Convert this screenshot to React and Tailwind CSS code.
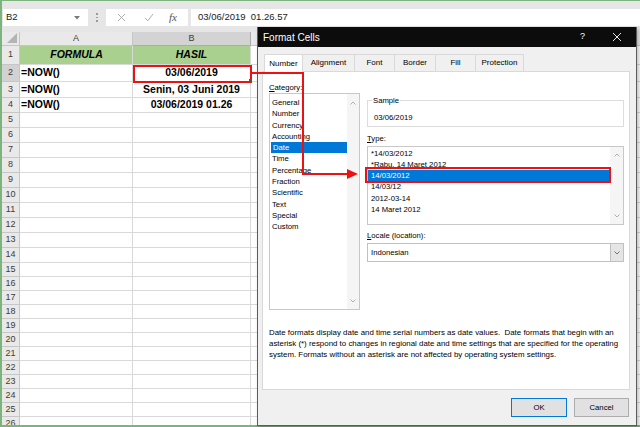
import React from "react";

const catItems = [
  "General",
  "Number",
  "Currency",
  "Accounting",
  "Date",
  "Time",
  "Percentage",
  "Fraction",
  "Scientific",
  "Text",
  "Special",
  "Custom",
];

const typeItems = [
  "*14/03/2012",
  "*Rabu, 14 Maret 2012",
  "14/03/2012",
  "14/03/12",
  "2012-03-14",
  "14 Maret 2012",
];

const tabs = [
  ["Number", "w-[39px]"],
  ["Alignment", "w-[52px]"],
  ["Font", "w-[40px]"],
  ["Border", "w-[41px]"],
  ["Fill", "w-[40px]"],
  ["Protection", "w-[48px]"],
];

const lowerRows = [5, 6, 7, 8, 9, 10, 11, 12, 13, 14, 15, 16, 17, 18, 19, 20, 21, 22, 23, 24, 25, 26];

const Up = () => (
  <svg width="6" height="4" viewBox="0 0 6 4">
    <path d="M0.5 3.5 L3 1 L5.5 3.5" fill="none" stroke="#a8a8a8" strokeWidth="0.9" />
  </svg>
);

const Down = ({ c = "#a8a8a8" }) => (
  <svg width="6" height="4" viewBox="0 0 6 4">
    <path d="M0.5 0.5 L3 3 L5.5 0.5" fill="none" stroke={c} strokeWidth="0.9" />
  </svg>
);

function Row({ num, h, a, b, green, sel }) {
  return (
    <div className={`flex shrink-0 ${h}`}>
      <div
        className={`w-[18px] shrink-0 flex items-center justify-center border-r border-b border-[#c6c6c6] text-[9px] text-[#3c3c3c] ${
          sel ? "bg-[#d2d2d2]" : "bg-[#e9e9e9]"
        }`}
      >
        {num}
      </div>
      <div
        className={`w-[113px] shrink-0 flex items-center pl-[1px] border-r border-b border-[#d9d9d9] text-[10.5px] font-bold text-black ${
          green ? "bg-[#a9d08e] justify-center italic" : ""
        }`}
      >
        {a}
      </div>
      <div
        className={`w-[118px] shrink-0 flex items-center justify-center border-r border-b border-[#d9d9d9] text-[10.5px] font-bold text-black ${
          green ? "bg-[#a9d08e] italic" : ""
        }`}
      >
        {b}
      </div>
      <div className="flex-1 flex border-b border-[#d9d9d9]">
        <div className="w-[110px] border-r border-[#d9d9d9]" />
        <div className="w-[110px] border-r border-[#d9d9d9]" />
        <div className="w-[110px] border-r border-[#d9d9d9]" />
      </div>
    </div>
  );
}

export default function App() {
  return (
    <div className="relative w-[640px] h-[427px] overflow-hidden bg-white font-['Liberation_Sans',Arial,sans-serif]">
      {/* spreadsheet */}
      <div className="h-[427px] flex flex-col overflow-hidden border-l-2 border-t border-b-2 border-[#7db37d]">
        {/* formula bar */}
        <div className="h-[31px] shrink-0 bg-[#e6e6e6] flex items-start pt-[8px]">
          <div className="ml-[1px] w-[85px] h-[17px] bg-white flex items-center justify-between px-[3px]">
            <span className="text-[9.5px] text-[#222]">B2</span>
            <svg width="6" height="4" viewBox="0 0 6 4" className="mr-[5px]">
              <path d="M0 0 L6 0 L3 3.5 Z" fill="#7a7a7a" />
            </svg>
          </div>
          <div className="w-[18px] h-[17px] flex flex-col items-center justify-center gap-[2px]">
            <div className="w-[1.5px] h-[1.5px] bg-[#9a9a9a]" />
            <div className="w-[1.5px] h-[1.5px] bg-[#9a9a9a]" />
            <div className="w-[1.5px] h-[1.5px] bg-[#9a9a9a]" />
          </div>
          <div className="w-[82px] h-[17px] bg-white flex items-center">
            <svg width="9" height="9" viewBox="0 0 9 9" className="ml-[11px]">
              <path d="M1 1 L8 8 M8 1 L1 8" stroke="#a5a5a5" strokeWidth="0.9" />
            </svg>
            <svg width="10" height="9" viewBox="0 0 10 9" className="ml-[18px]">
              <path d="M1 5 L3.8 7.8 L9 1" fill="none" stroke="#a5a5a5" strokeWidth="0.9" />
            </svg>
            <span className="ml-[15px] font-['Liberation_Serif',serif] italic text-[11px] text-[#555]">
              fx
            </span>
          </div>
          <div className="ml-[3px] flex-1 h-[17px] bg-white flex items-center pl-[7px]">
            <span className="text-[9.5px] text-[#222] whitespace-pre">03/06/2019  01.26.57</span>
          </div>
        </div>

        {/* column headers */}
        <div className="h-[14px] shrink-0 flex bg-[#e9e9e9] text-[9px] text-[#3c3c3c]">
          <div className="w-[18px] shrink-0 border-r border-b border-[#c6c6c6] flex items-end justify-end p-[2px]">
            <svg width="10" height="10" viewBox="0 0 10 10">
              <path d="M10 0 L10 10 L0 10 Z" fill="#b4b4b4" />
            </svg>
          </div>
          <div className="w-[113px] shrink-0 border-r border-b border-[#c6c6c6] flex items-center justify-center">
            A
          </div>
          <div className="w-[118px] shrink-0 border-r border-b border-[#ababab] bg-[#d3d3d3] flex items-center justify-center">
            B
          </div>
          <div className="flex-1 border-b border-[#c6c6c6]" />
        </div>

        <Row num={1} h="h-[19px]" a="FORMULA" b="HASIL" green />
        <Row num={2} h="h-[17px]" a="=NOW()" b="03/06/2019" sel />
        <Row num={3} h="h-[16px]" a="=NOW()" b="Senin, 03 Juni 2019" />
        <Row num={4} h="h-[15px]" a="=NOW()" b="03/06/2019 01.26" />
        {lowerRows.map((n) => (
          <Row key={n} num={n} h={n <= 14 ? "h-[15px]" : "h-[14px]"} a="" b="" />
        ))}
      </div>

      {/* B2 highlight */}
      <div className="absolute left-[133px] top-[65px] w-[119px] h-[18px] border-2 border-[#ee1111]" />
      <div className="absolute left-[249px] top-[79px] w-[3px] h-[3px] bg-[#217346]" />

      {/* dialog */}
      <div className="absolute left-[257px] top-[27px] w-[380px] h-[399px] flex flex-col bg-[#f0f0f0] border-x border-b border-[#5c5c5c] shadow-[2px_2px_4px_rgba(0,0,0,0.25)] text-[7.7px] text-black">
        <div className="h-[20px] shrink-0 bg-[#0c0c0c] flex items-center text-white">
          <span className="ml-[5px] text-[10px] flex-1">Format Cells</span>
          <span className="text-[9px] mr-[27px]">?</span>
          <svg width="10" height="10" viewBox="0 0 10 10" className="mr-[14px]">
            <path d="M1 1 L9 9 M9 1 L1 9" stroke="#ffffff" strokeWidth="0.9" />
          </svg>
        </div>

        <div className="flex-1 flex flex-col pl-[4px] pr-[6px]">
          {/* tabs */}
          <div className="mt-[7px] h-[17px] shrink-0 flex pl-[2px]">
            {tabs.map(([t, w], i) => (
              <div
                key={t}
                className={`${w} shrink-0 flex items-center justify-center border-t border-r border-[#d9d9d9] text-[8px] ${
                  i === 0 ? "bg-white border-l -mb-px relative z-10" : "bg-[#f0f0f0]"
                }`}
              >
                {t}
              </div>
            ))}
          </div>

          {/* panel */}
          <div className="h-[319px] w-[368px] shrink-0 bg-white border border-[#d9d9d9] flex flex-col pl-[6px] pt-[10px]">
            <div className="flex">
              {/* category */}
              <div className="w-[91px] shrink-0 flex flex-col">
                <div className="h-[11px] leading-[11px]">
                  <span className="underline decoration-[0.5px] underline-offset-1">C</span>ategory:
                </div>
                <div className="h-[217px] border border-[#c8c8c8] flex">
                  <div className="flex-1 flex flex-col pt-[3px]">
                    {catItems.map((c) => (
                      <div
                        key={c}
                        className={`h-[11.3px] leading-[11.3px] pl-[2px] ${
                          c === "Date" ? "bg-[#0078d7] text-white ml-[1px]" : ""
                        }`}
                      >
                        {c}
                      </div>
                    ))}
                  </div>
                  <div className="w-[12px] bg-[#f5f5f5] flex flex-col items-center justify-between pt-[7px] pb-[6px]">
                    <Up />
                    <Down />
                  </div>
                </div>
              </div>

              {/* right column */}
              <div className="ml-[7px] w-[257px] shrink-0 flex flex-col">
                <div className="mt-[18px] h-[27px] border border-[#dcdcdc] relative">
                  <span className="absolute -top-[6px] left-[4px] bg-white px-[1px] leading-[11px]">Sample</span>
                  <div className="pl-[6px] pt-[11px] leading-[11px]">03/06/2019</div>
                </div>
                <div className="mt-[6px] h-[11px] leading-[11px]">
                  <span className="underline decoration-[0.5px] underline-offset-1">T</span>ype:
                </div>
                <div className="mt-[2px] h-[79px] border border-[#c8c8c8] flex">
                  <div className="flex-1 flex flex-col pt-[0.5px]">
                    {typeItems.map((t, i) => (
                      <div
                        key={t}
                        className={`h-[11.3px] leading-[11.3px] pl-[3px] ${
                          i === 2 ? "bg-[#0078d7] text-white" : ""
                        }`}
                      >
                        {t}
                      </div>
                    ))}
                  </div>
                  <div className="w-[13px] bg-[#f5f5f5] flex flex-col items-center justify-between pt-[6px] pb-[6px]">
                    <Up />
                    <Down />
                  </div>
                </div>
                <div className="mt-[5px] h-[11px] leading-[11px]">
                  <span className="underline decoration-[0.5px] underline-offset-1">L</span>ocale (location):
                </div>
                <div className="mt-[2px] h-[19px] border border-[#c0c0c0] flex">
                  <div className="flex-1 flex items-center pl-[3px]">Indonesian</div>
                  <div className="w-[13px] bg-[#e5e5e5] border-l border-[#c0c0c0] flex items-center justify-center">
                    <Down c="#666666" />
                  </div>
                </div>
              </div>
            </div>

            <div className="mt-[17px] leading-[11px] whitespace-pre text-[7.9px]">
              <div>Date formats display date and time serial numbers as date values.  Date formats that begin with an</div>
              <div>asterisk (*) respond to changes in regional date and time settings that are specified for the operating</div>
              <div>system. Formats without an asterisk are not affected by operating system settings.</div>
            </div>
          </div>

          {/* buttons */}
          <div className="mt-[8px] flex justify-end gap-[7px] pr-[1px]">
            <div className="w-[56px] h-[19px] bg-[#e1e1e1] border border-[#0078d7] flex items-center justify-center">
              OK
            </div>
            <div className="w-[55px] h-[19px] bg-[#e1e1e1] border border-[#adadad] flex items-center justify-center">
              Cancel
            </div>
          </div>
        </div>
      </div>

      {/* red connector annotation */}
      <div className="absolute left-[252px] top-[72px] w-[52px] h-[2px] bg-[#ee1111]" />
      <div className="absolute left-[302px] top-[72px] w-[2px] h-[103px] bg-[#ee1111]" />
      <div className="absolute left-[302px] top-[173px] w-[47px] h-[2px] bg-[#ee1111]" />
      <svg className="absolute left-[347px] top-[169px]" width="11" height="10" viewBox="0 0 11 10">
        <path d="M0 0 L11 5 L0 10 Z" fill="#ee1111" />
      </svg>
      <div className="absolute left-[365px] top-[167px] w-[246px] h-[16px] border-2 border-[#ee1111]" />
    </div>
  );
}
